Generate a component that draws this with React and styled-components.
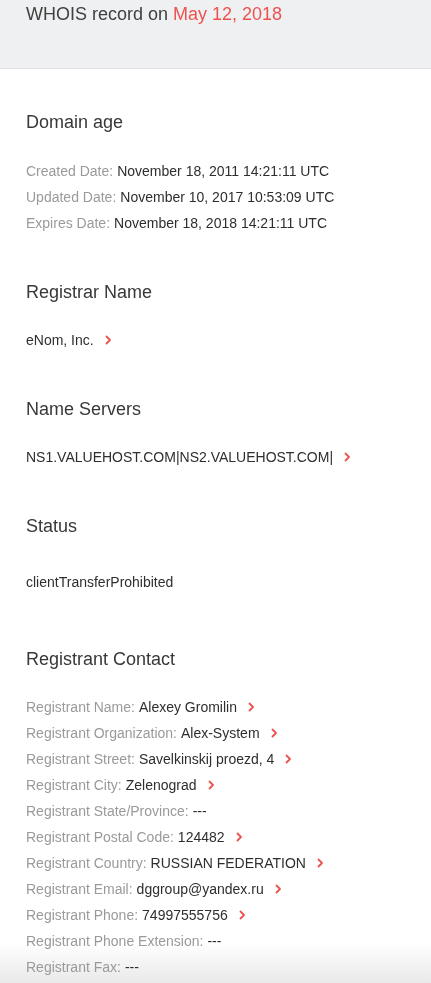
import React from 'react'
import styled, { createGlobalStyle } from 'styled-components'

const GlobalStyle = createGlobalStyle`
  html, body {
    margin: 0;
    padding: 0;
    background: #fff;
    font-family: "Liberation Sans", Arial, Helvetica, sans-serif;
    -webkit-font-smoothing: antialiased;
  }
`

const Page = styled.div`
  position: relative;
  z-index: 0;
  width: 100%;
  min-height: 100vh;
  background: #fff;
`

const Header = styled.header`
  box-sizing: border-box;
  height: 69px;
  padding: 3px 26px 0;
  background: #eff0f2;
  border-bottom: 1px solid #e0e0e2;
`

const Title = styled.h1`
  margin: 0;
  font-size: 18px;
  line-height: 22px;
  font-weight: 400;
  color: #404040;
`

const DateText = styled.span`
  color: #ec5350;
`

const Content = styled.main`
  padding: 41px 26px 0;
`

const Section = styled.section`
  margin-bottom: ${p => p.$gap || 44}px;
`

const Heading = styled.h2`
  margin: 0 0 ${p => p.$gap || 23}px;
  font-size: 18px;
  line-height: 24px;
  font-weight: 400;
  color: #383838;
`

const Row = styled.div`
  display: flex;
  align-items: center;
  font-size: 14px;
  line-height: 26px;
  color: #2e2e2e;
  white-space: nowrap;
`

const Label = styled.span`
  color: #9a9a9a;
  margin-right: 4px;
`

const Value = styled.span`
  color: #2e2e2e;
`

const Link = styled.a`
  display: inline-flex;
  align-items: center;
  margin-left: 11px;
  color: #ec5350;
  cursor: pointer;
`

const Fade = styled.div`
  position: fixed;
  z-index: -1;
  left: 0;
  right: 0;
  bottom: 0;
  height: 40px;
  pointer-events: none;
  background: linear-gradient(to bottom, rgba(236, 236, 236, 0), #e9e9e9);
`

function Chevron () {
  return (
    <Link>
      <svg width='7' height='10' viewBox='0 0 7 10' fill='none'>
        <path d='M1.5 1.5 L5 5 L1.5 8.5' stroke='currentColor' strokeWidth='1.8' strokeLinecap='round' strokeLinejoin='round' />
      </svg>
    </Link>
  )
}

function Field ({ label, value, link }) {
  return (
    <Row>
      {label && <Label>{label}:</Label>}
      <Value>{value}</Value>
      {link && <Chevron />}
    </Row>
  )
}

const dates = [
  { label: 'Created Date', value: 'November 18, 2011 14:21:11 UTC' },
  { label: 'Updated Date', value: 'November 10, 2017 10:53:09 UTC' },
  { label: 'Expires Date', value: 'November 18, 2018 14:21:11 UTC' }
]

const registrant = [
  { label: 'Registrant Name', value: 'Alexey Gromilin', link: true },
  { label: 'Registrant Organization', value: 'Alex-System', link: true },
  { label: 'Registrant Street', value: 'Savelkinskij proezd, 4', link: true },
  { label: 'Registrant City', value: 'Zelenograd', link: true },
  { label: 'Registrant State/Province', value: '---' },
  { label: 'Registrant Postal Code', value: '124482', link: true },
  { label: 'Registrant Country', value: 'RUSSIAN FEDERATION', link: true },
  { label: 'Registrant Email', value: 'dggroup@yandex.ru', link: true },
  { label: 'Registrant Phone', value: '74997555756', link: true },
  { label: 'Registrant Phone Extension', value: '---' },
  { label: 'Registrant Fax', value: '---' }
]

export default function App () {
  return (
    <Page>
      <GlobalStyle />
      <Header>
        <Title>WHOIS record on <DateText>May 12, 2018</DateText></Title>
      </Header>
      <Content>
        <Section>
          <Heading $gap={24}>Domain age</Heading>
          {dates.map(d => <Field key={d.label} {...d} />)}
        </Section>
        <Section>
          <Heading>Registrar Name</Heading>
          <Field value='eNom, Inc.' link />
        </Section>
        <Section>
          <Heading>Name Servers</Heading>
          <Field value='NS1.VALUEHOST.COM|NS2.VALUEHOST.COM|' link />
        </Section>
        <Section $gap={52}>
          <Heading $gap={31}>Status</Heading>
          <Field value='clientTransferProhibited' />
        </Section>
        <Section>
          <Heading>Registrant Contact</Heading>
          {registrant.map(r => <Field key={r.label} {...r} />)}
        </Section>
      </Content>
      <Fade />
    </Page>
  )
}
